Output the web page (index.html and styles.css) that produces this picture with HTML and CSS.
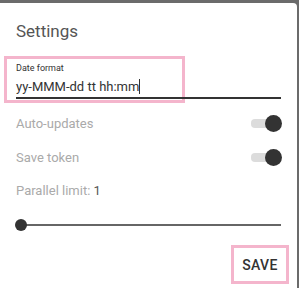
FILE: index.html
```html
<!DOCTYPE html>
<html lang="en">
<head>
    <meta charset="UTF-8">
    <title>Settings</title>
    <link rel="stylesheet" href="styles.css">
</head>
<body>
<div class="dialog">
    <div class="title">Settings</div>
    <div class="content">
        <div class="field mark">
            <div class="label">Date format</div>
            <div class="value">yy-MMM-dd tt hh:mm<span class="caret"></span></div>
        </div>
        <div class="underline"></div>
        <div class="row">
            <span class="muted">Auto-updates</span>
            <span class="switch"><span class="track"></span><span class="knob"></span></span>
        </div>
        <div class="row">
            <span class="muted">Save token</span>
            <span class="switch"><span class="track"></span><span class="knob"></span></span>
        </div>
        <div class="limit"><span class="muted">Parallel limit: </span><span class="num">1</span></div>
        <div class="slider"><span class="thumb"></span></div>
    </div>
    <div class="actions">
        <button class="save mark">SAVE</button>
    </div>
</div>
</body>
</html>
```

FILE: styles.css
```css
html, body {
    margin: 0;
    height: 100%;
}

body {
    background-color: #6b6b6b;
    font-family: Roboto, "Liberation Sans", sans-serif;
    padding-top: 3px;
    box-sizing: border-box;
}

.dialog {
    background-color: #ffffff;
    height: 285px;
    width: 297px;
    border-radius: 0 4px 0 0;
}

.title {
    padding: 18px 16px 0;
    font-size: 17px;
    color: #555555;
    height: 35px;
}

.content {
    padding: 0 16px;
}

.mark {
    border: 3px solid #f4b5cc;
}

.field {
    margin-left: -12px;
    width: 166px;
    height: 37px;
    padding: 4px 0 0 9px;
    box-sizing: content-box;
}

.label {
    font-size: 9px;
    color: #333333;
    line-height: 11px;
}

.value {
    font-size: 13px;
    color: #333333;
    line-height: 18px;
    margin-top: 4px;
}

.caret {
    display: inline-block;
    width: 1px;
    height: 15px;
    background-color: #333333;
    vertical-align: -3px;
}

.underline {
    height: 2px;
    background-color: #333333;
    margin-top: -6px;
}

.row {
    display: flex;
    justify-content: space-between;
    align-items: center;
    height: 34px;
    font-size: 13px;
}

.underline + .row {
    margin-top: 7px;
}

.muted {
    color: #aaaaaa;
}

.switch {
    position: relative;
    width: 31px;
    height: 17px;
    margin-right: -1px;
}

.track {
    position: absolute;
    left: 0;
    top: 4px;
    width: 24px;
    height: 9px;
    border-radius: 4px;
    background-color: #dcdcdc;
}

.knob {
    position: absolute;
    right: 0;
    top: 0;
    width: 17px;
    height: 17px;
    border-radius: 50%;
    background-color: #333333;
}

.limit {
    font-size: 13px;
    margin-top: 9px;
    line-height: 16px;
}

.num {
    color: #555555;
}

.slider {
    position: relative;
    height: 2px;
    background-color: #666666;
    margin-top: 25px;
}

.thumb {
    position: absolute;
    left: -1px;
    top: -5px;
    width: 12px;
    height: 12px;
    border-radius: 50%;
    background-color: #333333;
}

.actions {
    display: flex;
    justify-content: flex-end;
    padding: 19px 8px 0 0;
}

.save {
    background-color: #ffffff;
    width: 58px;
    height: 39px;
    font-family: Roboto, "Liberation Sans", sans-serif;
    font-size: 14px;
    font-weight: 500;
    color: #333333;
    padding: 0;
    letter-spacing: 0.3px;
}
```
